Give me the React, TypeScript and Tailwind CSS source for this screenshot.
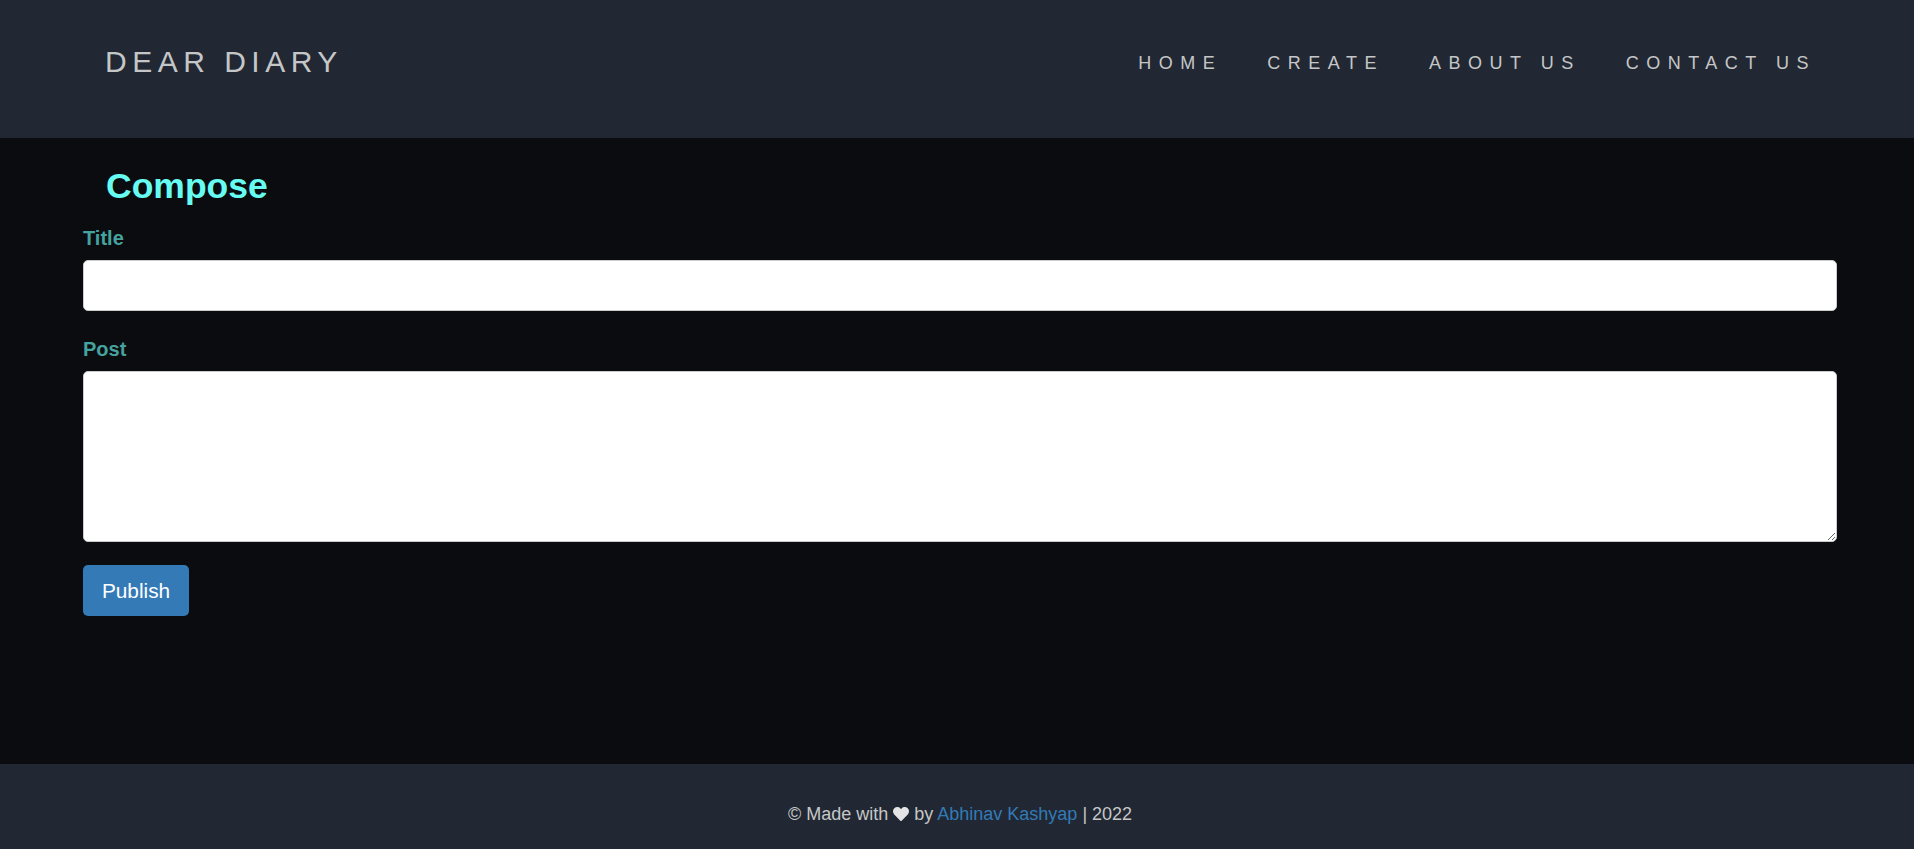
import React from "react";
import { FaHeart } from "react-icons/fa";

const navLinks = ["HOME", "CREATE", "ABOUT US", "CONTACT US"];

const App = () => {
  return (
    <div className="min-h-screen flex flex-col bg-[#0b0c10] font-['Liberation_Sans',Arial,sans-serif]">
      {/* Header */}
      <header className="h-[138px] shrink-0 bg-[#212833] flex items-start justify-between pl-[105px] pr-[98px] pt-[47px]">
        <a className="text-[30px] leading-[30px] tracking-[5.5px] text-[#c5c6c7]">
          DEAR DIARY
        </a>
        <ul className="flex gap-[45px] mt-[7px]">
          {navLinks.map((link) => (
            <li
              key={link}
              className="text-[18px] leading-[18px] tracking-[7.5px] text-[#c5c6c7]"
            >
              {link}
            </li>
          ))}
        </ul>
      </header>

      {/* Compose */}
      <main className="flex-1">
        <h1 className="mt-[31px] ml-[106px] text-[35.5px] leading-[35px] font-bold text-[#66fcf1]">
          Compose
        </h1>
        <form className="ml-[83px] mr-[77px]">
          <label className="block mt-[24px] text-[20px] leading-[20px] font-bold text-[#45a29e]">
            Title
          </label>
          <input
            type="text"
            className="block w-full mt-[12px] h-[51px] bg-white border border-[#ccc] rounded-[5px] px-3 text-[18px] text-[#555]"
          />
          <label className="block mt-[28px] text-[20px] leading-[20px] font-bold text-[#45a29e]">
            Post
          </label>
          <textarea
            className="block w-full mt-[12px] h-[171px] bg-white border border-[#ccc] rounded-[5px] px-3 py-2 text-[18px] text-[#555]"
          />
          <button
            type="button"
            className="block mt-[23px] h-[51px] w-[106px] bg-[#337ab7] rounded-[5px] text-white text-[20.8px] leading-[20px]"
          >
            Publish
          </button>
        </form>
      </main>

      {/* Footer */}
      <footer className="h-[85px] shrink-0 bg-[#212833] pt-[41px] pl-[6px] text-center text-[18px] leading-[18px] text-[#c5c6c7]">
        © Made with{" "}
        <FaHeart className="inline-block align-[-2px] text-[#e4e4e4]" size={16} />{" "}
        by <a className="text-[#337ab7]">Abhinav Kashyap</a> | 2022
      </footer>
    </div>
  );
};

export default App;
